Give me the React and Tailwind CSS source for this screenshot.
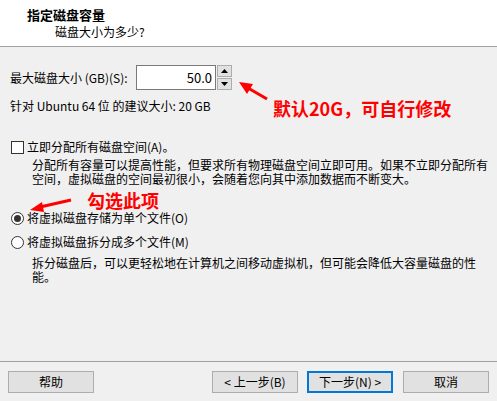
// App.jsx ─ VMware "指定磁盘容量" wizard step, with red annotations
const FONT = "font-['Noto_Sans_CJK_SC',sans-serif]"

function WinButton({ children, primary = false, className = '' }) {
  return (
    <button
      className={`h-[22px] w-[86px] bg-[#e1e1e1] text-[12px] leading-none text-black ${
        primary ? 'border-2 border-[#0078d7]' : 'border border-[#adadad]'
      } ${className}`}
    >
      {children}
    </button>
  )
}

function Radio({ checked }) {
  return (
    <span className="flex h-[13px] w-[13px] shrink-0 items-center justify-center rounded-full border border-[#333] bg-white">
      {checked && <span className="h-[7px] w-[7px] rounded-full bg-[#333]" />}
    </span>
  )
}

function Spinner() {
  return (
    <div className="ml-px flex h-[25px] w-[15px] flex-col gap-px">
      {/* up */}
      <div className="flex flex-1 items-center justify-center border border-[#adadad] bg-[#e1e1e1]">
        <svg width="7" height="4" viewBox="0 0 7 4">
          <polygon points="3.5,0 7,4 0,4" fill="#000" />
        </svg>
      </div>
      {/* down */}
      <div className="flex flex-1 items-center justify-center border border-[#adadad] bg-[#e1e1e1]">
        <svg width="7" height="4" viewBox="0 0 7 4">
          <polygon points="0,0 7,0 3.5,4" fill="#000" />
        </svg>
      </div>
    </div>
  )
}

export default function App() {
  return (
    <div className={`relative flex h-[401px] w-[497px] flex-col overflow-hidden bg-[#f0f0f0] text-[12px] text-black ${FONT}`}>
      {/* Header */}
      <div className="h-[47px] shrink-0 border-b border-[#a0a0a0] bg-white">
        <div className="ml-[27px] mt-[7px] text-[13px] font-bold leading-[16px]">指定磁盘容量</div>
        <div className="ml-[55px] mt-px leading-[16px]">磁盘大小为多少?</div>
      </div>

      {/* Body */}
      <div className="flex-1">
        <div className="ml-[10px] mt-[18px] flex items-center">
          <span className="w-[126px] whitespace-nowrap leading-[14px]">最大磁盘大小 (GB)(S):</span>
          <div className="flex h-[25px] w-[80px] items-center justify-end border border-[#7a7a7a] bg-white pr-[3px] text-[13px]">
            50.0
          </div>
          <Spinner />
        </div>
        <div className="ml-[10px] mt-[9px] leading-[14px]">针对 Ubuntu 64 位 的建议大小: 20 GB</div>

        <div className="ml-[11px] mt-[27px] flex items-center gap-[3px] leading-[14px]">
          <span className="h-[13px] w-[13px] shrink-0 border border-[#333] bg-white" />
          <span>立即分配所有磁盘空间(A)。</span>
        </div>
        <div className="ml-[32px] mt-[4px] whitespace-nowrap leading-[14px]">
          <div>分配所有容量可以提高性能，但要求所有物理磁盘空间立即可用。如果不立即分配所有</div>
          <div>空间，虚拟磁盘的空间最初很小，会随着您向其中添加数据而不断变大。</div>
        </div>

        <div className="ml-[11px] mt-[25px] flex items-center gap-[3px] leading-[14px]">
          <Radio checked />
          <span>将虚拟磁盘存储为单个文件(O)</span>
        </div>
        <div className="ml-[11px] mt-[10px] flex items-center gap-[3px] leading-[14px]">
          <Radio />
          <span>将虚拟磁盘拆分成多个文件(M)</span>
        </div>
        <div className="ml-[32px] mt-[7px] whitespace-nowrap leading-[14px]">
          <div>拆分磁盘后，可以更轻松地在计算机之间移动虚拟机，但可能会降低大容量磁盘的性</div>
          <div>能。</div>
        </div>
      </div>

      {/* Footer */}
      <div className="flex h-[40px] shrink-0 items-start border-t border-[#a0a0a0] pt-[9px]">
        <WinButton className="ml-[8px]">帮助</WinButton>
        <WinButton className="ml-auto">&lt; 上一步(B)</WinButton>
        <WinButton primary className="ml-[9px]">下一步(N) &gt;</WinButton>
        <WinButton className="ml-[10px] mr-[8px]">取消</WinButton>
      </div>

      {/* Annotations */}
      <div className="absolute left-[273px] top-[98px] whitespace-nowrap text-[18px] font-bold leading-[20px] text-[#f00]">
        默认20G，可自行修改
      </div>
      <div className="absolute left-[87px] top-[190px] whitespace-nowrap text-[18px] font-bold leading-[20px] text-[#f00]">
        勾选此项
      </div>
      <svg className="pointer-events-none absolute left-0 top-0" width="497" height="401">
        <line x1="267" y1="99" x2="248" y2="88" stroke="#f00" strokeWidth="3" />
        <polygon points="239,82 253,84 247,94" fill="#f00" />
        <line x1="71" y1="200" x2="40" y2="207" stroke="#f00" strokeWidth="3" />
        <polygon points="30,210 42,202 44,212" fill="#f00" />
      </svg>
    </div>
  )
}
